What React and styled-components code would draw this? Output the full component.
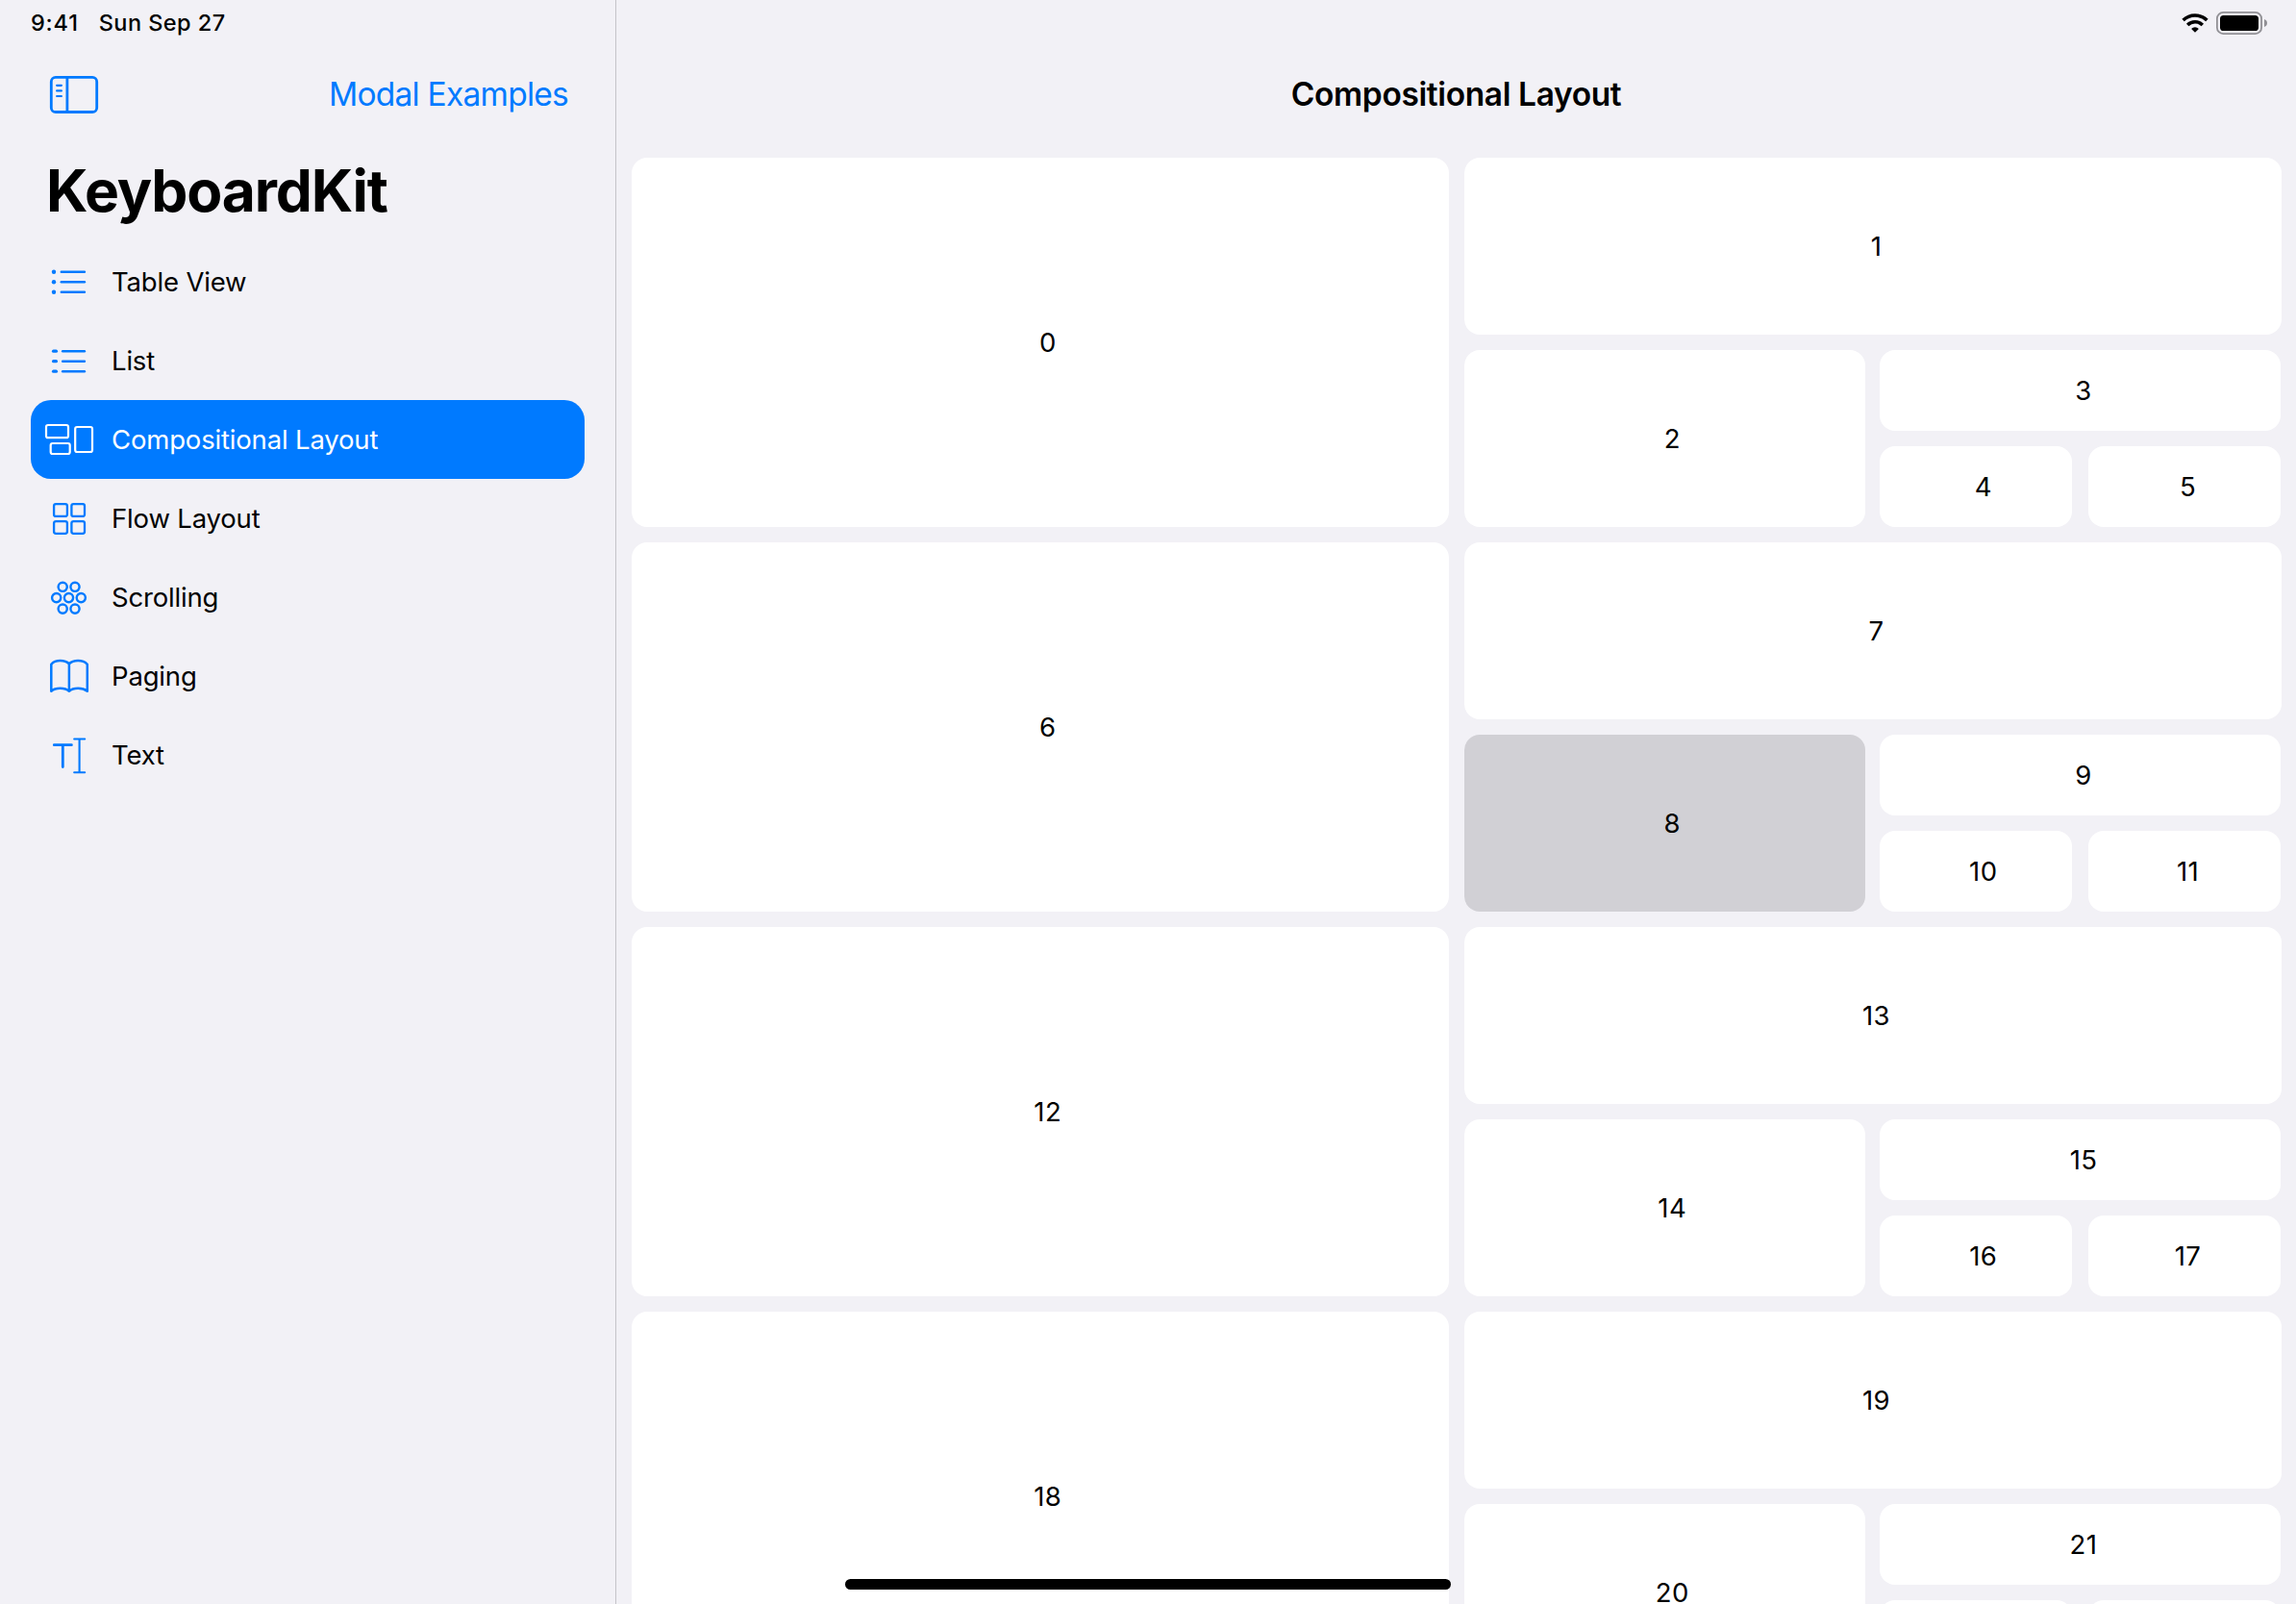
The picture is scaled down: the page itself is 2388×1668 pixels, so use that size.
import React from "react";
import styled, { createGlobalStyle } from "styled-components";

const GlobalStyle = createGlobalStyle`
  * { box-sizing: border-box; }
  body {
    margin: 0;
    background: #f2f1f6;
    overflow: hidden;
  }
`;

const Screen = styled.div`
  position: relative;
  display: flex;
  width: 2388px;
  height: 1668px;
  overflow: hidden;
  background: #f2f1f6;
  color: #000;
  font-family: Inter, "Liberation Sans", sans-serif;
`;

const Sidebar = styled.aside`
  display: flex;
  flex-direction: column;
  flex: none;
  width: 641px;
  border-right: 1px solid #c5c4c9;
`;

const StatusBar = styled.div`
  display: flex;
  align-items: center;
  justify-content: ${(p) => (p.$end ? "flex-end" : "flex-start")};
  gap: ${(p) => (p.$end ? "8px" : "21px")};
  height: 48px;
  padding: ${(p) => (p.$end ? "0 29px 0 0" : "0 0 0 32px")};
  flex: none;
`;

const StatusText = styled.span`
  font-size: 23.5px;
  font-weight: 500;
  line-height: 48px;
  letter-spacing: ${(p) => p.$track}px;
  white-space: nowrap;
`;

const SidebarBar = styled.div`
  display: flex;
  align-items: center;
  justify-content: space-between;
  height: 100px;
  padding: 0 49px 0 50px;
`;

const IconButton = styled.button`
  display: flex;
  padding: 0;
  border: 0;
  background: none;
  color: #007aff;
`;

const TextButton = styled.button`
  padding: 0;
  border: 0;
  background: none;
  color: #007aff;
  font: inherit;
  font-size: 33.5px;
  line-height: 44px;
  letter-spacing: -0.75px;
  white-space: nowrap;
`;

const LargeTitle = styled.h1`
  margin: 0;
  height: 104px;
  padding-left: 48px;
  font-size: 60.5px;
  font-weight: 700;
  line-height: 101px;
  letter-spacing: -1.15px;
`;

const Menu = styled.nav`
  display: flex;
  flex-direction: column;
  padding: 0 32px;
`;

const MenuRow = styled.a`
  display: flex;
  align-items: center;
  gap: 17px;
  height: 82px;
  padding-left: 13px;
  border-radius: 21px;
  background: ${(p) => (p.$selected ? "#007aff" : "transparent")};
  color: ${(p) => (p.$selected ? "#fff" : "#007aff")};
`;

const MenuLabel = styled.span`
  color: ${(p) => (p.$selected ? "#fff" : "#000")};
  font-size: 27.5px;
  line-height: 40px;
  letter-spacing: -0.17px;
  white-space: nowrap;
`;

const Main = styled.main`
  display: flex;
  flex-direction: column;
  flex: 1;
  min-width: 0;
`;

const NavTitle = styled.h2`
  flex: none;
  margin: 0;
  height: 116px;
  font-size: 33.5px;
  font-weight: 600;
  line-height: 100px;
  letter-spacing: -0.38px;
  text-align: center;
`;

const Groups = styled.div`
  display: flex;
  flex-direction: column;
  flex: 1;
  min-height: 0;
  gap: 16px;
  padding: 0 15px 0 16px;
`;

const Group = styled.section`
  display: grid;
  flex: none;
  grid-template-columns: 850px 850px;
  column-gap: 16px;
  height: 384px;
`;

const Column = styled.div`
  display: grid;
  grid-template-rows: 1fr 1fr;
  gap: 16px;
`;

const Pair = styled.div`
  display: grid;
  grid-template-columns: ${(p) => p.$columns};
  column-gap: ${(p) => p.$gap};
`;

const Cell = styled.div`
  display: flex;
  align-items: center;
  justify-content: center;
  padding-left: ${(p) => p.$inset}px;
  border-radius: 16px;
  background: ${(p) => (p.$selected ? "#d1d0d5" : "#fff")};
  font-size: 27.5px;
  line-height: 34px;
  letter-spacing: 0.4px;
`;

const HomeIndicator = styled.div`
  position: absolute;
  left: 879px;
  top: 1642px;
  width: 630px;
  height: 11px;
  border-radius: 6px;
  background: #000;
`;

const MenuIcon = ({ children, width = 2.5 }) => (
  <svg
    width="54"
    height="54"
    viewBox="45 -27 54 54"
    fill="none"
    stroke="currentColor"
    strokeWidth={width}
    strokeLinecap="round"
    strokeLinejoin="round"
  >
    {children}
  </svg>
);

const TableIcon = () => (
  <MenuIcon>
    {[-10.3, 0.2, 10.7].map((y) => (
      <g key={y}>
        <circle cx="56" cy={y} r="2.2" fill="currentColor" stroke="none" />
        <path d={`M63.8 ${y}H87.9`} />
      </g>
    ))}
  </MenuIcon>
);

const ListIcon = () => (
  <MenuIcon>
    {[-9.8, 0.7, 11.2].map((y) => (
      <g key={y}>
        <path d={`M55.6 ${y}H58.4`} strokeWidth="3.3" />
        <path d={`M65.2 ${y}H87.9`} />
      </g>
    ))}
  </MenuIcon>
);

const CompositionalIcon = () => (
  <MenuIcon width={2.2}>
    <rect x="48" y="-15" width="23" height="13.2" rx="2" />
    <rect x="52.7" y="4" width="20" height="11" rx="2" />
    <rect x="78.2" y="-13" width="17.8" height="26" rx="2" />
  </MenuIcon>
);

const FlowIcon = () => (
  <MenuIcon width={2.3}>
    <rect x="56.1" y="-14.9" width="13.8" height="12.8" rx="2" />
    <rect x="74.4" y="-14.9" width="13.6" height="12.8" rx="2" />
    <rect x="56.1" y="3.1" width="13.8" height="12.7" rx="2" />
    <rect x="74.4" y="3.1" width="13.6" height="12.7" rx="2" />
  </MenuIcon>
);

const ScrollingIcon = () => (
  <MenuIcon width={2.4}>
    {[
      [65.2, -10.7],
      [78, -10.7],
      [58.7, 0.6],
      [71.5, 0.6],
      [84.3, 0.6],
      [65.2, 12.1],
      [78, 12.1],
    ].map(([x, y]) => (
      <circle key={`${x},${y}`} cx={x} cy={y} r="4.6" />
    ))}
  </MenuIcon>
);

const PagingIcon = () => (
  <MenuIcon>
    <path d="M71.9 -12.6C69.6 -15 66.2 -15.9 62.6 -15.9C59 -15.9 55.6 -14.8 53.3 -12.2V15.8C55.5 13.8 59 12.8 62.6 12.8C66.2 12.8 69.6 13.6 71.9 15.8C74.2 13.6 77.6 12.8 81.2 12.8C84.8 12.8 88.3 13.8 90.8 15.8V-12.2C88.3 -14.8 84.8 -15.9 81.2 -15.9C77.6 -15.9 74.2 -15 71.9 -12.6ZV15.8" />
  </MenuIcon>
);

const TextIcon = () => (
  <MenuIcon>
    <path d="M56.3 -10.3H74.4M65.3 -10.3V12.5" strokeWidth="2.8" />
    <path d="M77.2 -16.5H88.2M82.6 -16.5V18.2M77.2 18.2H88.2" strokeWidth="2.1" />
  </MenuIcon>
);

const SidebarToggleIcon = () => (
  <svg width="54" height="44" viewBox="50 76 54 44" fill="none" stroke="currentColor">
    <rect x="53.3" y="80.3" width="47.4" height="36.2" rx="4.6" strokeWidth="2.8" />
    <path d="M69.9 80V117" strokeWidth="2.8" />
    <path d="M59.1 88.8H63.9M59.1 94.4H63.9M59.1 100H63.9" strokeWidth="2.2" strokeLinecap="round" />
  </svg>
);

const WifiIcon = () => (
  <svg width="28" height="22" viewBox="0 0 28 22" fill="none" stroke="#000" strokeWidth="3.5">
    <path d="M1.6 8.1A17.6 17.6 0 0 1 26.4 8.1" />
    <path d="M6.2 13A11.1 11.1 0 0 1 21.8 13" />
    <path d="M14 20.8L10.1 16.9A5.6 5.6 0 0 1 17.9 16.9Z" fill="#000" stroke="none" />
  </svg>
);

const BatteryIcon = () => (
  <svg width="54" height="24" viewBox="0 0 54 24">
    <rect x="0.9" y="0.9" width="46.2" height="22.2" rx="6.4" fill="none" stroke="#919095" strokeWidth="1.8" />
    <rect x="4" y="4" width="40" height="16" rx="3.6" fill="#000" />
    <path d="M50 8C52 8.7 53 10.2 53 12S52 15.3 50 16Z" fill="#919095" />
  </svg>
);

const menu = [
  { label: "Table View", Icon: TableIcon },
  { label: "List", Icon: ListIcon },
  { label: "Compositional Layout", Icon: CompositionalIcon, selected: true },
  { label: "Flow Layout", Icon: FlowIcon },
  { label: "Scrolling", Icon: ScrollingIcon },
  { label: "Paging", Icon: PagingIcon },
  { label: "Text", Icon: TextIcon },
];

const SELECTED_CELL = 8;
const LAST_VISIBLE_CELL = 21;

const NumberCell = ({ value, inset }) => (
  <Cell $selected={value === SELECTED_CELL} $inset={inset}>
    {value <= LAST_VISIBLE_CELL ? value : null}
  </Cell>
);

const CellGroup = ({ start }) => (
  <Group>
    <NumberCell value={start} inset={15.5} />
    <Column>
      <NumberCell value={start + 1} inset={7} />
      <Pair $columns="417px 417px" $gap="15px">
        <NumberCell value={start + 2} inset={15.5} />
        <Column>
          <NumberCell value={start + 3} inset={7} />
          <Pair $columns="200px 200px" $gap="17px">
            <NumberCell value={start + 4} inset={15.5} />
            <NumberCell value={start + 5} inset={7} />
          </Pair>
        </Column>
      </Pair>
    </Column>
  </Group>
);

export default function App() {
  return (
    <>
      <GlobalStyle />
      <Screen>
        <Sidebar>
          <StatusBar>
            <StatusText $track={0.8}>9:41</StatusText>
            <StatusText $track={0.45}>Sun Sep 27</StatusText>
          </StatusBar>
          <SidebarBar>
            <IconButton aria-label="Toggle sidebar">
              <SidebarToggleIcon />
            </IconButton>
            <TextButton>Modal Examples</TextButton>
          </SidebarBar>
          <LargeTitle>KeyboardKit</LargeTitle>
          <Menu>
            {menu.map(({ label, Icon, selected }) => (
              <MenuRow key={label} $selected={selected}>
                <Icon />
                <MenuLabel $selected={selected}>{label}</MenuLabel>
              </MenuRow>
            ))}
          </Menu>
        </Sidebar>
        <Main>
          <StatusBar $end>
            <WifiIcon />
            <BatteryIcon />
          </StatusBar>
          <NavTitle>Compositional Layout</NavTitle>
          <Groups>
            {[0, 6, 12, 18].map((start) => (
              <CellGroup key={start} start={start} />
            ))}
          </Groups>
        </Main>
        <HomeIndicator />
      </Screen>
    </>
  );
}
